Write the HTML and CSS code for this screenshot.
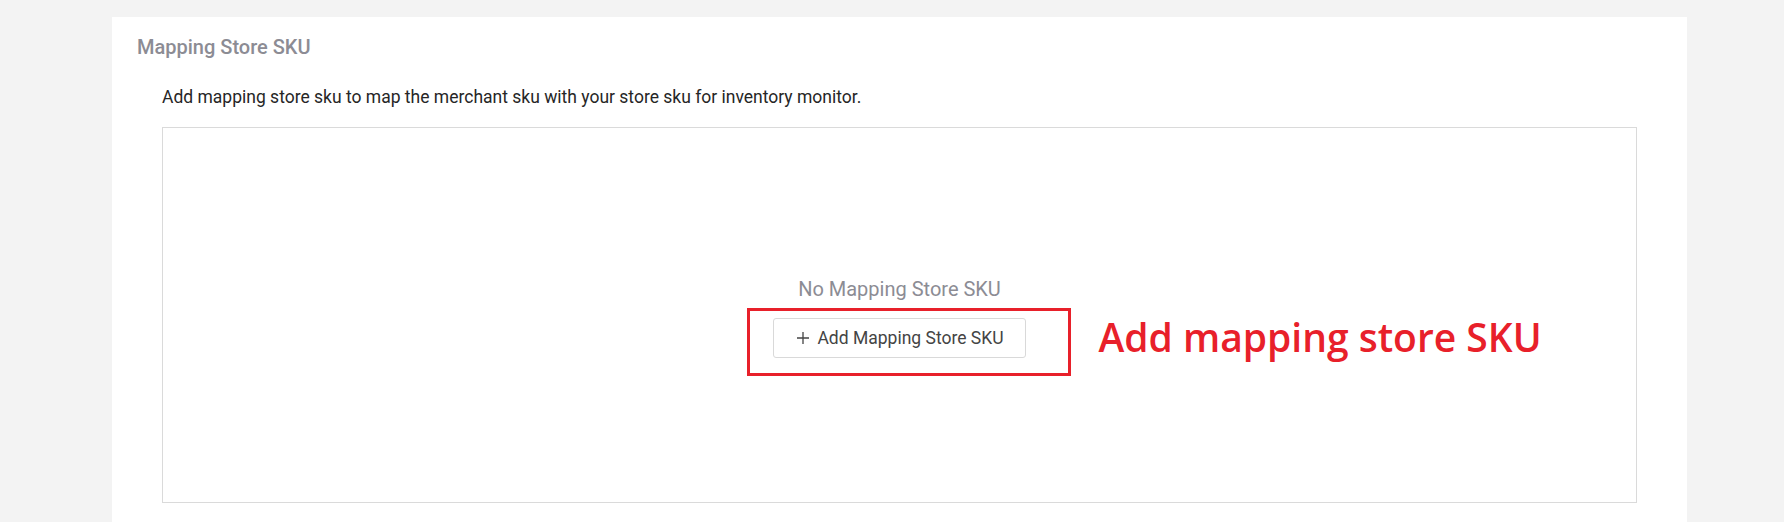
FILE: index.html
```html
<!DOCTYPE html>
<html lang="en">
<head>
  <meta charset="UTF-8" />
  <meta name="viewport" content="width=device-width, initial-scale=1.0"/>
  <title>Mapping Store SKU</title>
  <link rel="stylesheet" href="styles.css">
</head>
<body>
  <div class="page">
    <div class="card">
      <h2 class="card-title">Mapping Store SKU</h2>

      <div class="card-body">
        <p class="hint">Add mapping store sku to map the merchant sku with your store sku for inventory monitor.</p>

        <!-- Empty list -->
        <div class="sku-box">
          <div class="empty">
            <p class="empty-text">No Mapping Store SKU</p>
            <div class="action">
              <button type="button" class="add-btn">
                <svg width="12" height="12" viewBox="0 0 12 12"><path d="M6 0v12M0 6h12" stroke="#444" stroke-width="1.3" fill="none"/></svg>
                Add Mapping Store SKU
              </button>
              <div class="callout-frame"></div>
              <div class="callout-text">Add mapping store SKU</div>
            </div>
          </div>
        </div>
      </div>
    </div>
  </div>
</body>
</html>
```

FILE: styles.css
```css
body {
  font-family: Roboto, "Liberation Sans", sans-serif;
  background: #f3f3f3;
  margin: 0;
  height: 522px;
  overflow: hidden;
}

.page {
  padding: 17px 97px 0 112px;
}

.card {
  background: #fff;
  padding: 18px 25px 40px;
  min-height: 505px;
  box-sizing: border-box;
}

.card-title {
  margin: 0;
  font-size: 20px;
  font-weight: 500;
  line-height: 24px;
  color: #8c8c94;
}

.card-body {
  padding: 0 25px;
}

.hint {
  margin: 26px 0 18px;
  font-size: 17.5px;
  line-height: 24px;
  color: #262626;
}

.sku-box {
  height: 376px;
  box-sizing: border-box;
  border: 1px solid #dadada;
  display: flex;
  justify-content: center;
  align-items: center;
  padding-top: 2px;
}

.empty {
  display: flex;
  flex-direction: column;
  align-items: center;
}

.empty-text {
  margin: 0 0 15px;
  font-size: 20px;
  line-height: 28px;
  color: #8c8c94;
}

.action {
  position: relative;
}

.add-btn {
  display: inline-flex;
  align-items: center;
  gap: 8px;
  height: 40px;
  padding: 0 21px 0 23px;
  background: #fff;
  border: 1px solid #d9d9d9;
  border-radius: 3px;
  font-family: inherit;
  font-size: 17.5px;
  color: #444;
  cursor: pointer;
}

/* red annotation drawn over the screenshot */
.callout-frame {
  position: absolute;
  left: -26px;
  top: -10px;
  width: 324px;
  height: 68px;
  box-sizing: border-box;
  border: 3px solid #e8202a;
}

.callout-text {
  position: absolute;
  left: 325px;
  top: -1px;
  white-space: nowrap;
  font-family: "Open Sans", "Noto Sans CJK SC", sans-serif;
  font-size: 39px;
  font-weight: 600;
  line-height: 40px;
  color: #e8202a;
}
```
